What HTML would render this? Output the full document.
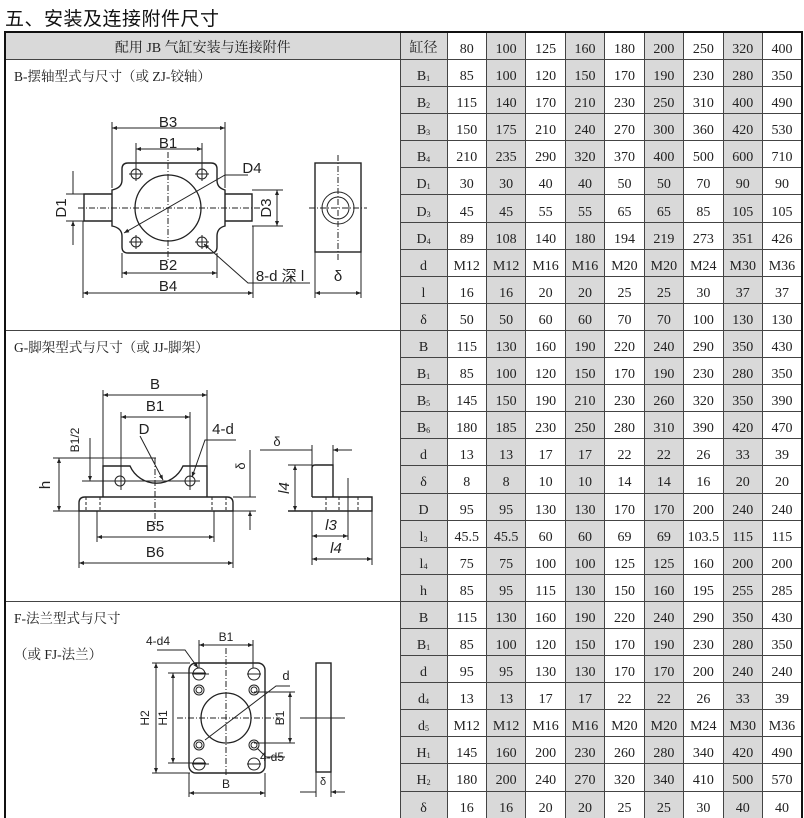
<!DOCTYPE html>
<html><head><meta charset="utf-8">
<style>
html,body{margin:0;padding:0;background:#fff;width:804px;height:818px;overflow:hidden;position:relative}
.t{position:absolute;left:5px;top:4px;font:19px "Liberation Sans","Noto Sans CJK SC",sans-serif;color:#111;letter-spacing:0.5px}
table{position:absolute;left:4px;top:31px;width:797px;border-collapse:collapse;table-layout:fixed;border:2px solid #111;font:14px "Liberation Serif","Noto Serif CJK SC",serif;color:#222}
tr{height:27.1px}
td{border:1px solid #444;text-align:center;padding:8px 0 0 0;box-sizing:border-box;height:27.1px;line-height:18px;white-space:nowrap;overflow:hidden}
tr td:nth-last-child(even){background:#d9d9d9}
td.L{background:#fff !important;text-align:left;vertical-align:top;padding:8px 0 0 8px;font-size:13.5px;line-height:18px}
td.H{background:#d9d9d9 !important;font-size:14px;padding-top:6px}
sub{font-size:8px;vertical-align:-1px;line-height:0}
svg{position:absolute;left:0;top:0}
svg text{font-family:"Liberation Sans","DejaVu Sans",sans-serif;fill:#222}
</style></head><body>
<div class="t">五、安装及连接附件尺寸</div>
<table>
<colgroup><col style="width:395px"><col style="width:47px"><col span="9" style="width:39.44px"></colgroup>
<tr><td class="H">配用 JB 气缸安装与连接附件</td><td style="padding-top:6px">缸径</td><td>80</td><td>100</td><td>125</td><td>160</td><td>180</td><td>200</td><td>250</td><td>320</td><td>400</td></tr>
<tr><td class="L" rowspan="10">B-摆轴型式与尺寸（或 ZJ-铰轴）</td><td>B<sub>1</sub></td><td>85</td><td>100</td><td>120</td><td>150</td><td>170</td><td>190</td><td>230</td><td>280</td><td>350</td></tr>
<tr><td>B<sub>2</sub></td><td>115</td><td>140</td><td>170</td><td>210</td><td>230</td><td>250</td><td>310</td><td>400</td><td>490</td></tr>
<tr><td>B<sub>3</sub></td><td>150</td><td>175</td><td>210</td><td>240</td><td>270</td><td>300</td><td>360</td><td>420</td><td>530</td></tr>
<tr><td>B<sub>4</sub></td><td>210</td><td>235</td><td>290</td><td>320</td><td>370</td><td>400</td><td>500</td><td>600</td><td>710</td></tr>
<tr><td>D<sub>1</sub></td><td>30</td><td>30</td><td>40</td><td>40</td><td>50</td><td>50</td><td>70</td><td>90</td><td>90</td></tr>
<tr><td>D<sub>3</sub></td><td>45</td><td>45</td><td>55</td><td>55</td><td>65</td><td>65</td><td>85</td><td>105</td><td>105</td></tr>
<tr><td>D<sub>4</sub></td><td>89</td><td>108</td><td>140</td><td>180</td><td>194</td><td>219</td><td>273</td><td>351</td><td>426</td></tr>
<tr><td>d</td><td>M12</td><td>M12</td><td>M16</td><td>M16</td><td>M20</td><td>M20</td><td>M24</td><td>M30</td><td>M36</td></tr>
<tr><td>l</td><td>16</td><td>16</td><td>20</td><td>20</td><td>25</td><td>25</td><td>30</td><td>37</td><td>37</td></tr>
<tr><td>δ</td><td>50</td><td>50</td><td>60</td><td>60</td><td>70</td><td>70</td><td>100</td><td>130</td><td>130</td></tr>
<tr><td class="L" rowspan="10">G-脚架型式与尺寸（或 JJ-脚架）</td><td>B</td><td>115</td><td>130</td><td>160</td><td>190</td><td>220</td><td>240</td><td>290</td><td>350</td><td>430</td></tr>
<tr><td>B<sub>1</sub></td><td>85</td><td>100</td><td>120</td><td>150</td><td>170</td><td>190</td><td>230</td><td>280</td><td>350</td></tr>
<tr><td>B<sub>5</sub></td><td>145</td><td>150</td><td>190</td><td>210</td><td>230</td><td>260</td><td>320</td><td>350</td><td>390</td></tr>
<tr><td>B<sub>6</sub></td><td>180</td><td>185</td><td>230</td><td>250</td><td>280</td><td>310</td><td>390</td><td>420</td><td>470</td></tr>
<tr><td>d</td><td>13</td><td>13</td><td>17</td><td>17</td><td>22</td><td>22</td><td>26</td><td>33</td><td>39</td></tr>
<tr><td>δ</td><td>8</td><td>8</td><td>10</td><td>10</td><td>14</td><td>14</td><td>16</td><td>20</td><td>20</td></tr>
<tr><td>D</td><td>95</td><td>95</td><td>130</td><td>130</td><td>170</td><td>170</td><td>200</td><td>240</td><td>240</td></tr>
<tr><td>l<sub>3</sub></td><td>45.5</td><td>45.5</td><td>60</td><td>60</td><td>69</td><td>69</td><td>103.5</td><td>115</td><td>115</td></tr>
<tr><td>l<sub>4</sub></td><td>75</td><td>75</td><td>100</td><td>100</td><td>125</td><td>125</td><td>160</td><td>200</td><td>200</td></tr>
<tr><td>h</td><td>85</td><td>95</td><td>115</td><td>130</td><td>150</td><td>160</td><td>195</td><td>255</td><td>285</td></tr>
<tr><td class="L" rowspan="8">F-法兰型式与尺寸<br><br>（或 FJ-法兰）</td><td>B</td><td>115</td><td>130</td><td>160</td><td>190</td><td>220</td><td>240</td><td>290</td><td>350</td><td>430</td></tr>
<tr><td>B<sub>1</sub></td><td>85</td><td>100</td><td>120</td><td>150</td><td>170</td><td>190</td><td>230</td><td>280</td><td>350</td></tr>
<tr><td>d</td><td>95</td><td>95</td><td>130</td><td>130</td><td>170</td><td>170</td><td>200</td><td>240</td><td>240</td></tr>
<tr><td>d<sub>4</sub></td><td>13</td><td>13</td><td>17</td><td>17</td><td>22</td><td>22</td><td>26</td><td>33</td><td>39</td></tr>
<tr><td>d<sub>5</sub></td><td>M12</td><td>M12</td><td>M16</td><td>M16</td><td>M20</td><td>M20</td><td>M24</td><td>M30</td><td>M36</td></tr>
<tr><td>H<sub>1</sub></td><td>145</td><td>160</td><td>200</td><td>230</td><td>260</td><td>280</td><td>340</td><td>420</td><td>490</td></tr>
<tr><td>H<sub>2</sub></td><td>180</td><td>200</td><td>240</td><td>270</td><td>320</td><td>340</td><td>410</td><td>500</td><td>570</td></tr>
<tr><td>δ</td><td>16</td><td>16</td><td>20</td><td>20</td><td>25</td><td>25</td><td>30</td><td>40</td><td>40</td></tr>
</table>

<svg width="804" height="818" viewBox="0 0 804 818">
<defs><marker id="a" viewBox="0 0 10 10" refX="10" refY="5" markerWidth="7" markerHeight="5" orient="auto-start-reverse"><path d="M0 1 L10 5 L0 9 z" fill="#222"/></marker></defs>
<g stroke="#222" stroke-width="1" fill="none">
<path stroke-width="1.4" d="M128 163 H211 Q217 163 217 169 V180 Q217 188 225 190 V226 Q217 228 217 236 V247 Q217 253 211 253 H128 Q122 253 122 247 V236 Q122 228 112 226 V190 Q122 188 122 180 V169 Q122 163 128 163 Z"/>
<path stroke-width="1.4" d="M112 194 H84 V221 H112 M225 194 H252 V221 H225"/>
<circle cx="168" cy="208" r="33" stroke-width="1.3"/>
<g><circle cx="136" cy="174" r="5"/><circle cx="202" cy="174" r="5"/><circle cx="136" cy="242" r="5"/><circle cx="202" cy="242" r="5"/>
<path d="M129 174 H143 M136 167 V181 M195 174 H209 M202 167 V181 M129 242 H143 M136 235 V249 M195 242 H209 M202 235 V249"/></g>
<path stroke-dasharray="6 2 1 2" d="M78 208 H262 M168 152 V262"/>
<path d="M124 233 L225 175 H248" marker-start="url(#a)"/>
<path d="M112 122 V188 M225 122 V188 M136 143 V168 M202 143 V168"/>
<path d="M112 128 H225" marker-start="url(#a)" marker-end="url(#a)"/>
<path d="M136 149 H202" marker-start="url(#a)" marker-end="url(#a)"/>
<path d="M66 194 H84 M66 221 H84 M73 171 V194 M73 245 V221" marker-end="url(#a)"/>
<path d="M252 190 H283 M252 226 H283"/>
<path d="M277 190 V226" marker-start="url(#a)" marker-end="url(#a)"/>
<path d="M122 253 V278 M217 253 V278 M83 221 V298 M253 226 V298"/>
<path d="M122 273 H217" marker-start="url(#a)" marker-end="url(#a)"/>
<path d="M83 293 H253" marker-start="url(#a)" marker-end="url(#a)"/>
<path d="M310 283 H248 L204 244" marker-end="url(#a)"/>
<rect x="315" y="163" width="46" height="89" stroke-width="1.4"/>
<circle cx="338" cy="208" r="16"/><circle cx="338" cy="208" r="11"/>
<path stroke-dasharray="6 2 1 2" d="M309 208 H367 M338 155 V260"/>
<path d="M315 252 V298 M361 252 V298"/>
<path d="M315 293 H361" marker-start="url(#a)" marker-end="url(#a)"/>
<path stroke-width="1.4" d="M103 497 V466 H130 A29 29 0 0 0 183 466 H207 V497"/>
<path stroke-width="1.4" d="M79 511 V503 Q79 497 85 497 H227 Q233 497 233 503 V511 Z"/>
<circle cx="120" cy="481" r="5"/><circle cx="190" cy="481" r="5"/>
<path d="M86 497 V511 M100 497 V511 M212 497 V511 M226 497 V511" stroke-dasharray="3 2"/>
<path stroke-dasharray="6 2 1 2" d="M155 458 V525"/>
<path d="M103 390 V466 M207 390 V466 M121 412 V490 M190 412 V490 M82 481 H200"/>
<path d="M103 395 H207" marker-start="url(#a)" marker-end="url(#a)"/>
<path d="M121 417 H190" marker-start="url(#a)" marker-end="url(#a)"/>
<path d="M53 458 H156 M53 511 H79"/>
<path d="M59 458 V511" marker-start="url(#a)" marker-end="url(#a)"/>
<path d="M90 438 V481" marker-end="url(#a)"/>
<path d="M140 436 L163 480" marker-end="url(#a)"/>
<path d="M236 440 H205 L192 477" marker-end="url(#a)"/>
<path d="M97 511 V542 M214 511 V542 M79 511 V568 M233 511 V568"/>
<path d="M97 537 H214" marker-start="url(#a)" marker-end="url(#a)"/>
<path d="M79 563 H233" marker-start="url(#a)" marker-end="url(#a)"/>
<path d="M233 497 H256 M233 511 H256"/>
<path d="M250 450 V497 M250 530 V511" marker-end="url(#a)"/>
<path stroke-width="1.4" d="M312 497 V468 Q312 465 315 465 H333 V497 M288 511 H372 V497 H312"/>
<path d="M326 497 V511 M339 497 V511 M358 497 V511" stroke-dasharray="3 2"/>
<path d="M312 445 V497 M333 445 V465"/>
<path d="M260 450 H312 M352 450 H333" marker-end="url(#a)"/>
<path d="M288 465 H312"/>
<path d="M295 465 V511" marker-start="url(#a)" marker-end="url(#a)"/>
<path d="M312 511 V565 M348 478 V540 M372 511 V565"/>
<path d="M312 536 H348" marker-start="url(#a)" marker-end="url(#a)"/>
<path d="M312 559 H372" marker-start="url(#a)" marker-end="url(#a)"/>
<rect x="189" y="663" width="76" height="110" rx="7" stroke-width="1.4"/>
<circle cx="226" cy="718" r="25" stroke-width="1.3"/>
<g><circle cx="199" cy="674" r="6"/><circle cx="254" cy="674" r="6"/><circle cx="199" cy="764" r="6"/><circle cx="254" cy="764" r="6"/>
<circle cx="199" cy="690" r="5"/><circle cx="199" cy="690" r="3"/><circle cx="254" cy="690" r="5"/><circle cx="254" cy="690" r="3"/>
<circle cx="199" cy="745" r="5"/><circle cx="199" cy="745" r="3"/><circle cx="254" cy="745" r="5"/><circle cx="254" cy="745" r="3"/>
<path d="M192 674 H209 M247 674 H261 M192 764 H209 M247 764 H261"/></g>
<path stroke-dasharray="6 2 1 2" d="M226 648 V775 M177 718 H280"/>
<path d="M199 640 V668 M253 640 V668"/>
<path d="M199 645 H253" marker-start="url(#a)" marker-end="url(#a)"/>
<path d="M157 650 H185 L198 668" marker-end="url(#a)"/>
<path d="M152 663 H190 M152 773 H190 M168 673 H206 M168 763 H206"/>
<path d="M156 663 V773" marker-start="url(#a)" marker-end="url(#a)"/>
<path d="M173 673 V763" marker-start="url(#a)" marker-end="url(#a)"/>
<path d="M254 692 H295 M254 743 H295"/>
<path d="M290 692 V743" marker-start="url(#a)" marker-end="url(#a)"/>
<path d="M205 740 L276 686 H290"/>
<path d="M285 757 H266 L257 748"/>
<path d="M189 773 V797 M265 773 V797"/>
<path d="M189 793 H265" marker-start="url(#a)" marker-end="url(#a)"/>
<rect x="316" y="663" width="15" height="109" stroke-width="1.4"/>
<path d="M300 718 H345"/>
<path d="M316 772 V797 M331 772 V797"/>
<path d="M300 792 H316 M345 792 H331" marker-end="url(#a)"/>
</g>
<g font-size="15" text-anchor="middle">
<text x="168" y="127">B3</text><text x="168" y="148">B1</text><text x="252" y="173">D4</text>
<text x="168" y="270">B2</text><text x="168" y="291">B4</text>
<text transform="translate(66 208) rotate(-90)">D1</text>
<text transform="translate(271 208) rotate(-90)">D3</text>
<text x="280" y="281" font-family="Liberation Serif,Noto Serif CJK SC,serif">8-d 深 l</text>
<text x="338" y="281" font-family="Liberation Serif,serif">δ</text>
<text x="155" y="389">B</text><text x="155" y="411">B1</text><text x="144" y="434">D</text><text x="223" y="434">4-d</text>
<text x="155" y="531">B5</text><text x="155" y="557">B6</text>
<text transform="translate(50 485) rotate(-90)">h</text>
<text transform="translate(79 440) rotate(-90)" font-size="12">B1/2</text>
<text transform="translate(245 466) rotate(-90)" font-size="13">δ</text>
<text x="277" y="446" font-size="13">δ</text>
<text transform="translate(289 488) rotate(-90)" font-style="italic">l4</text>
<text x="331" y="530" font-style="italic">l3</text><text x="336" y="553" font-style="italic">l4</text>
<text x="226" y="641" font-size="12">B1</text><text x="158" y="645" font-size="12">4-d4</text>
<text transform="translate(149 718) rotate(-90)" font-size="12">H2</text>
<text transform="translate(167 718) rotate(-90)" font-size="12">H1</text>
<text transform="translate(284 718) rotate(-90)" font-size="12">B1</text>
<text x="286" y="680" font-size="13">d</text><text x="272" y="761" font-size="12">4-d5</text>
<text x="226" y="788" font-size="12">B</text><text x="323" y="785" font-size="11">δ</text>
</g>
</svg>
</body></html>
